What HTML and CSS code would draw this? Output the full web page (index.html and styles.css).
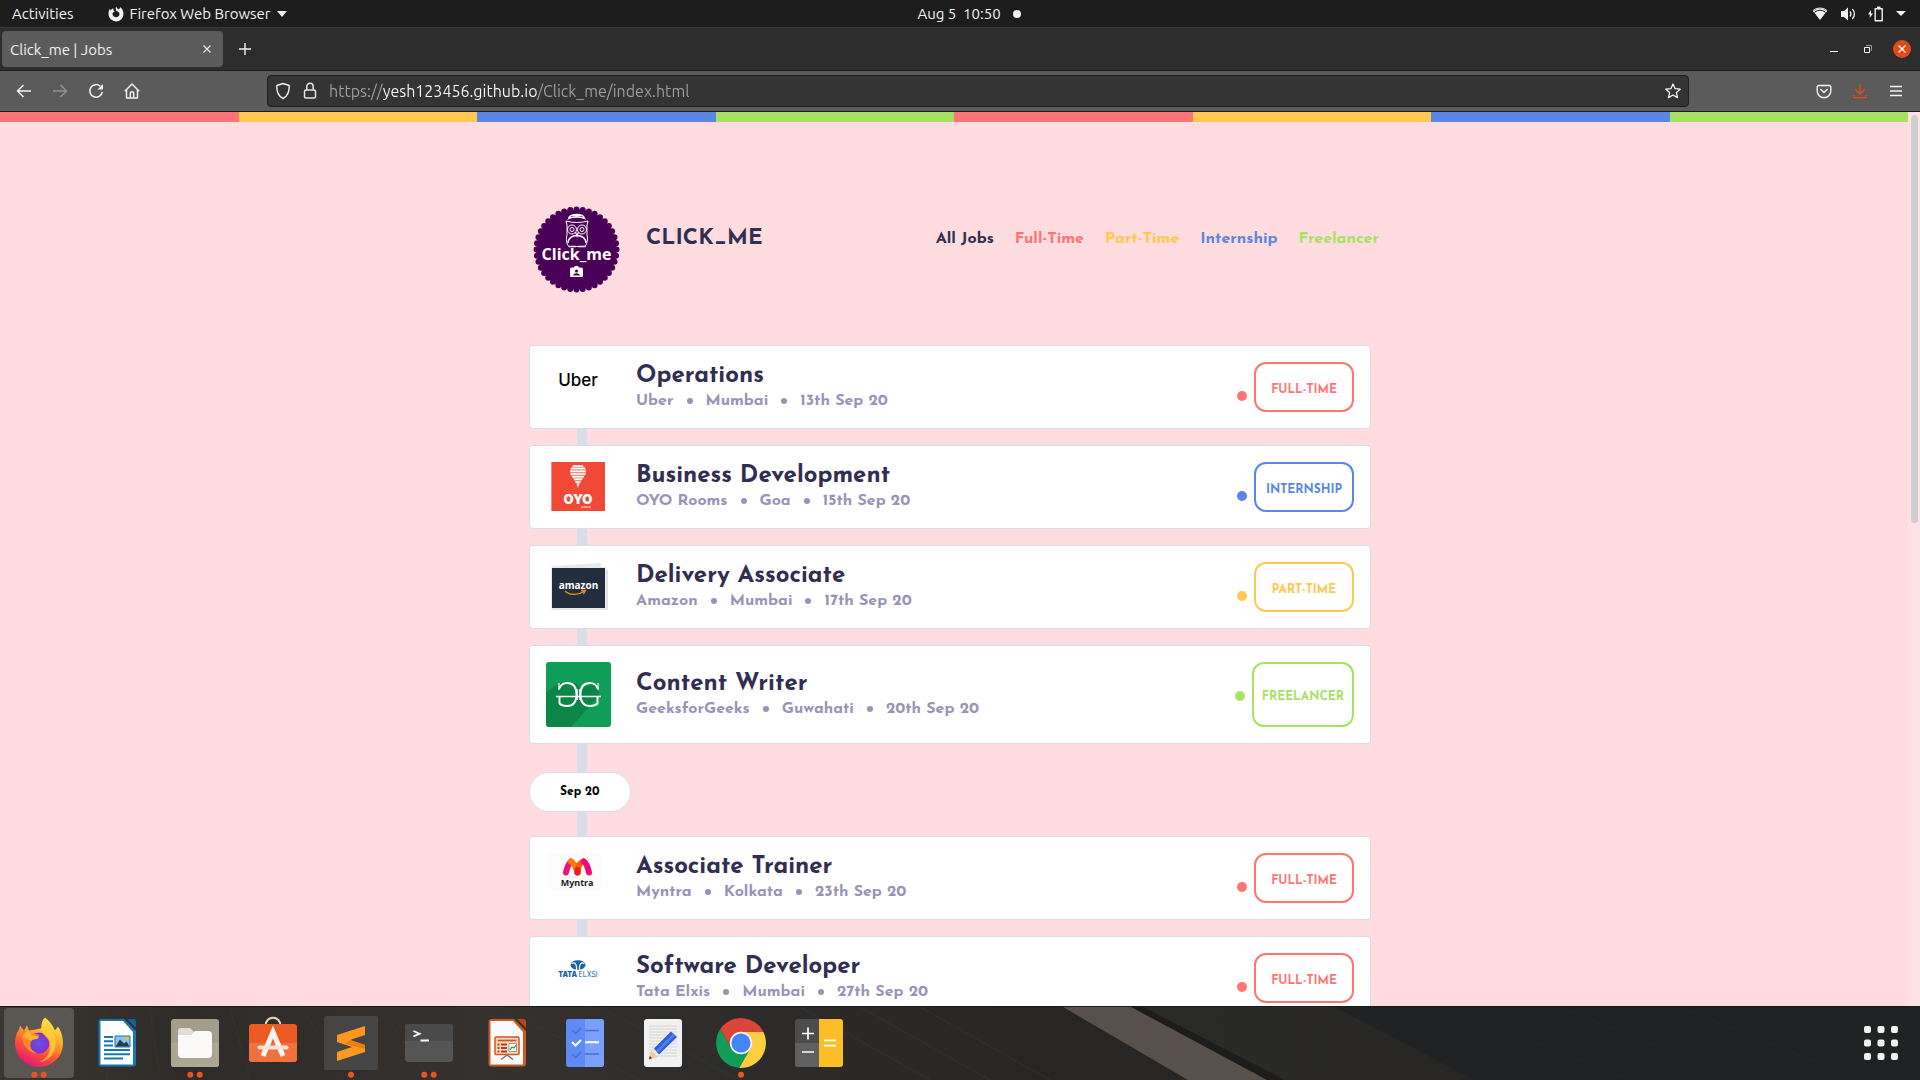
FILE: index.html
```html
<!DOCTYPE html>
<html lang="en">
<head>
<meta charset="utf-8">
<title>Click_me | Jobs</title>
<link rel="stylesheet" href="styles.css">
</head>
<body class="desktop">

<header class="system-bar">
  <div class="system-left">
    <button class="bar-button">Activities</button>
    <button class="bar-button app-menu">
      <svg width="16" height="16" viewBox="0 0 16 16" fill="#f2f2f2"><path d="M8 0.500c.5 1.200 1.800 1.600 1.800 3C12 3 12.200 1.800 12 1c2 1.500 3.500 3.800 3.500 6.800a7.500 7.500 0 0 1-15 .2C.5 6 1 4 2 2.500c0 1 .3 1.500.8 2C3.200 3 4.500 2.300 5.500 2.500 5 4 5.500 5 7 5.200 5 6 4.300 7 4.500 8.500a3.600 3.600 0 0 0 7-.2C11.500 6.500 10.500 5.500 8.500 5 8 4 7.300 2.500 8 .5z"/></svg>
      <span>Firefox Web Browser</span>
      <svg width="10" height="6" viewBox="0 0 10 6" fill="#f2f2f2"><path d="M0 0h10L5 6z"/></svg>
    </button>
  </div>
  <button class="bar-button clock"><span>Aug 5&nbsp; 10:50</span><span class="clock-dot"></span></button>
  <div class="system-right">
    <svg width="16" height="14" viewBox="0 0 16 14"><path d="M8 13 1 4a11 11 0 0 1 14 0z" fill="#f2f2f2"/><path d="M1 3.500a11 11 0 0 1 14 0" fill="none" stroke="#f2f2f2" stroke-width="1"/><path d="M2.500 5.300a9 9 0 0 1 11 0" fill="none" stroke="#1d1d1d" stroke-width="1"/></svg>
    <svg width="16" height="14" viewBox="0 0 16 14"><path d="M1 4h3l4-3.500v13L4 10H1z" fill="#f2f2f2"/><path d="M10 4.500a4 4 0 0 1 0 5M12.300 2a7 7 0 0 1 0 10" fill="none" stroke="#f2f2f2" stroke-width="1.300"/></svg>
    <svg width="16" height="16" viewBox="0 0 16 16"><path d="M3 4 0 8.500h2L1.500 12 5 7.500H3z" fill="#f2f2f2"/><path d="M7.200 2.700h7v12h-7z" fill="none" stroke="#f2f2f2" stroke-width="1.400" stroke-linejoin="round"/><path d="M9 .6h3.500v2H9z" fill="#f2f2f2"/></svg>
    <svg width="10" height="6" viewBox="0 0 10 6" fill="#f2f2f2"><path d="M0 0h10L5 5z"/></svg>
  </div>
</header>

<div class="tab-bar">
  <div class="tab">
    <span>Click_me | Jobs</span>
    <button class="icon-button" aria-label="Close tab"><svg width="8" height="8" viewBox="0 0 8 8"><path d="m.5.500 7 7m0-7-7 7" stroke="#e8e8e8" stroke-width="1.100"/></svg></button>
  </div>
  <button class="icon-button" aria-label="New tab"><svg width="12" height="12" viewBox="0 0 12 12"><path d="M6 0v12M0 6h12" stroke="#f4f4f4" stroke-width="1.400"/></svg></button>
  <div class="window-controls">
    <button class="icon-button" aria-label="Minimise"><svg width="18" height="18" viewBox="0 0 18 18"><path d="M5 11.500h8" stroke="#fff"/></svg></button>
    <button class="icon-button" aria-label="Restore"><svg width="18" height="18" viewBox="0 0 18 18" fill="none"><path d="M7 5.500h5.500V11" stroke="#999"/><path d="M5.500 7.500h5v5h-5z" stroke="#fff"/></svg></button>
    <button class="icon-button" aria-label="Close window"><svg width="18" height="18" viewBox="0 0 18 18"><circle cx="9" cy="9" r="9" fill="#e04b18"/><path d="m5.500 5.500 7 7m0-7-7 7" stroke="#fff" stroke-width="1.300"/></svg></button>
  </div>
</div>

<nav class="toolbar" aria-label="Browser">
  <div class="toolbar-left">
    <button class="icon-button" aria-label="Back"><svg width="16" height="16" viewBox="0 0 16 16" fill="none" stroke="#f4f4f4" stroke-width="1.400"><path d="M15 8H1.500M7.500 2l-6 6 6 6"/></svg></button>
    <button class="icon-button" aria-label="Forward"><svg width="16" height="16" viewBox="0 0 16 16" fill="none" stroke="#939393" stroke-width="1.400"><path d="M1 8h13.500M8.500 2l6 6-6 6"/></svg></button>
    <button class="icon-button" aria-label="Reload"><svg width="16" height="16" viewBox="0 0 16 16" fill="none" stroke="#f4f4f4" stroke-width="1.500"><path d="M14.300 9a6.300 6.300 0 1 1-2-5.800"/><path d="M15 1v5.500H9.500z" fill="#f4f4f4" stroke="none"/></svg></button>
    <button class="icon-button" aria-label="Home"><svg width="16" height="16" viewBox="0 0 16 16" fill="none" stroke="#f4f4f4" stroke-width="1.400" stroke-linejoin="round"><path d="M.8 8.200 8 1l7.200 7.200M2.500 7v8h11V7M6.300 15v-4.500a1.700 1.700 0 0 1 3.400 0V15"/></svg></button>
  </div>
  <div class="address">
    <svg width="16" height="18" viewBox="0 0 16 18" fill="none" stroke="#f4f4f4" stroke-width="1.400"><path d="M8 1.500 14.200 3.500C14.500 10 13 14 8 16.500 3 14 1.500 10 1.800 3.500z" stroke-linejoin="round"/></svg>
    <svg width="14" height="18" viewBox="0 0 14 18" fill="none" stroke="#e4e4e4" stroke-width="1.500"><rect x="1.500" y="8" width="11" height="8" rx="1.500"/><path d="M3.800 8V4.500a3.200 3.200 0 0 1 6.400 0V8"/></svg>
    <input class="address-input" type="text" aria-label="Address" value="https://yesh123456.github.io/Click_me/index.html" spellcheck="false">
    <button class="icon-button" aria-label="Bookmark"><svg width="16" height="16" viewBox="0 0 16 16" fill="none" stroke="#f4f4f4" stroke-width="1.300" stroke-linejoin="round"><path d="m8 1 2.100 4.700 5.100.5-3.800 3.400 1.100 5L8 12l-4.500 2.600 1.100-5L.8 6.200l5.100-.5z"/></svg></button>
  </div>
  <div class="toolbar-right">
    <button class="icon-button" aria-label="Pocket"><svg width="16" height="16" viewBox="0 0 16 16" fill="none" stroke="#f4f4f4" stroke-width="1.400" stroke-linecap="round" stroke-linejoin="round"><path d="M2.500 2.500h11a1.300 1.300 0 0 1 1.300 1.300V8A6.800 6.800 0 0 1 1.200 8V3.800a1.300 1.300 0 0 1 1.300-1.300zM4.800 6.500 8 9.500l3.200-3"/></svg></button>
    <button class="icon-button" aria-label="Downloads"><svg width="16" height="16" viewBox="0 0 16 16" fill="none" stroke="#e04b18" stroke-width="1.400" stroke-linecap="round"><path d="M8 1v10M3.500 6.800 8 11l4.500-4.200M1.800 12.500v1a1.300 1.300 0 0 0 1.300 1.300h9.800a1.300 1.300 0 0 0 1.300-1.300v-1"/></svg></button>
    <button class="icon-button" aria-label="Menu"><svg width="16" height="16" viewBox="0 0 16 16"><path d="M2 3.500h12M2 8h12M2 12.500h12" stroke="#f4f4f4" stroke-width="1.300"/></svg></button>
  </div>
</nav>

<main class="viewport">
  <div class="page">
    <div class="stripes"><i class="red"></i><i class="yellow"></i><i class="blue"></i><i class="green"></i><i class="red"></i><i class="yellow"></i><i class="blue"></i><i class="green"></i></div>
    <div class="container">
      <header class="site-header">
        <svg class="site-logo" width="94" height="88" viewBox="0 0 94 88">
          <circle cx="47.500" cy="44.500" r="40" fill="#4b0057" stroke="#4b0057" stroke-width="6" stroke-linecap="round" pathLength="240" stroke-dasharray="0 6"/>
          <g fill="none" stroke="#fff" stroke-width="1">
            <path d="M39.500 13.500c1.500-5.500 15-5.500 16 0M40 13.500c4-2 11-2 15.500 0l-2-3h-11.500z" stroke-width="1.300"/>
            <path d="M37 16c6 2 15.500 2 22 0l-1 4v10c1 4 .5 8-2 11.500H40c-3-3-3-7-2-11.500V20z"/>
            <circle cx="43" cy="24.500" r="4.500"/><circle cx="43" cy="24.500" r="2"/>
            <circle cx="53" cy="24.500" r="4.500"/><circle cx="53" cy="24.500" r="2"/>
            <path d="m46.500 27 1.500 4 1.500-4M39 38c0-10 18-10 18 0" stroke-width="1.300"/>
            <path d="M39.500 41.500h7.500M49 41.500h7.500" stroke-width="1.400"/>
          </g>
          <text x="47.500" y="55" text-anchor="middle" class="logo-word">Click_me</text>
          <path d="M42.500 62.500h2.500a2.500 1.800 0 0 1 5 0h2.500a1.500 1.500 0 0 1 1.500 1.500v7a1 1 0 0 1-1 1H42a1 1 0 0 1-1-1v-7a1.500 1.500 0 0 1 1.500-1.500z" fill="#fff"/>
          <circle cx="47.500" cy="66" r="1.600" fill="#4b0057"/><path d="M44 70.500c1-3 6-3 7 0z" fill="#4b0057"/>
        </svg>
        <h1 class="site-name">CLICK_ME</h1>
        <nav class="filters" aria-label="Job types">
          <a href="#all">All Jobs</a>
          <a href="#full" class="red">Full-Time</a>
          <a href="#part" class="yellow">Part-Time</a>
          <a href="#intern" class="blue">Internship</a>
          <a href="#free" class="green">Freelancer</a>
        </nav>
      </header>

      <section class="timeline">
        <article class="job">
          <svg class="job-logo" width="65" height="50" viewBox="0 0 65 50"><text x="32" y="24" text-anchor="middle" class="uber-word">Uber</text></svg>
          <div class="job-text"><h2>Operations</h2><ul><li>Uber</li><li>Mumbai</li><li>13th Sep 20</li></ul></div>
          <span class="job-dot red"></span><button class="job-type red">FULL-TIME</button>
        </article>
        <article class="job">
          <svg class="job-logo" width="65" height="50" viewBox="0 0 65 50">
            <path d="M5 0h54v49H5z" fill="#f04a37"/><path d="M5 0h1v49H5z" fill="#f68a7c"/>
            <path d="M27 3h10l3 3.500v5l-8 13.500-8-13.500v-5z" fill="#f58d7f"/>
            <path d="M27 4h10M25 6.500h14M24 9.200h16M24.500 12h15M26 14.700h12M28 17.300h8M29.500 20h5M31 22.500h2M31.500 24.500h1" stroke="#fff" stroke-width="1.600"/>
            <text x="32" y="42" text-anchor="middle" class="oyo-word">OYO</text>
            <path d="M35 45h10" stroke="#f7a79b" stroke-width="1.500"/>
          </svg>
          <div class="job-text"><h2>Business Development</h2><ul><li>OYO Rooms</li><li>Goa</li><li>15th Sep 20</li></ul></div>
          <span class="job-dot blue"></span><button class="job-type blue">INTERNSHIP</button>
        </article>
        <article class="job">
          <svg class="job-logo" width="65" height="50" viewBox="0 0 65 50">
            <path d="m6 4 49-3v6H6z" fill="#e9e9e9"/><path d="M7 8h55v40H7z" fill="#e4e4e4"/><path d="M5 5h55v42H5z" fill="#e6e8ea"/><path d="M6 6h53v40H6z" fill="#222e3e"/>
            <text x="32.500" y="27" text-anchor="middle" class="amazon-word">amazon</text>
            <path d="M19 29c5 4.500 13 4.500 19 .5M35 28.500h4.500l-2 3.500" fill="none" stroke="#e8921b" stroke-width="1.300"/>
          </svg>
          <div class="job-text"><h2>Delivery Associate</h2><ul><li>Amazon</li><li>Mumbai</li><li>17th Sep 20</li></ul></div>
          <span class="job-dot yellow"></span><button class="job-type yellow">PART-TIME</button>
        </article>
        <article class="job">
          <svg class="job-logo" width="65" height="65" viewBox="0 0 65 65">
            <rect width="65" height="65" rx="3" fill="#0f9d58"/>
            <path d="M0 30 14 21h16l3 4 18-4 2 13L25 65H3a3 3 0 0 1-3-3z" fill="#0b8646"/>
            <g fill="none" stroke="#fff" stroke-width="1.900">
              <path d="M52 27c-1.500-4-4-6-8-6-7 0-9.500 5-9.500 11.500S37 44 44 44c3.500 0 6-1 7.500-2.500v-7"/>
              <path d="M13 27c1.500-4 4-6 8-6 7 0 9.500 5 9.500 11.500S28 44 21 44c-3.500 0-6-1-7.500-2.500v-7"/>
              <path d="M10 34.500h45" stroke-width="1.600"/><path d="M13 28v-7M52 28v-7" stroke-width="1.200"/>
              <path d="M31 27v11M34 27v11" stroke-width="1.600"/>
            </g>
          </svg>
          <div class="job-text"><h2>Content Writer</h2><ul><li>GeeksforGeeks</li><li>Guwahati</li><li>20th Sep 20</li></ul></div>
          <span class="job-dot green"></span><button class="job-type green">FREELANCER</button>
        </article>
        <div class="month">Sep 20</div>
        <article class="job">
          <svg class="job-logo" width="65" height="50" viewBox="0 0 65 50">
            <path d="M1 0h54v37H1z" fill="#fcfcfc"/>
            <g fill="none" stroke-width="6" stroke-linecap="round"><path d="M20 19.500c1-5 3-9 5-11" stroke="#f3127a"/><path d="M25 8.500c3 1 5 6 6.500 11" stroke="#ff7a00"/><path d="M37 8.500c-3 1-5 6-5.500 11" stroke="#ff5a00"/><path d="M38 8.500c2.500 2 4 6 5 11" stroke="#f4047f"/><path d="M31.500 17v2.500" stroke="#f01d1d"/></g>
            <text x="31" y="33" text-anchor="middle" class="myntra-word">Myntra</text>
          </svg>
          <div class="job-text"><h2>Associate Trainer</h2><ul><li>Myntra</li><li>Kolkata</li><li>23th Sep 20</li></ul></div>
          <span class="job-dot red"></span><button class="job-type red">FULL-TIME</button>
        </article>
        <article class="job">
          <svg class="job-logo" width="65" height="50" viewBox="0 0 65 50">
            <ellipse cx="32" cy="12" rx="7.500" ry="4.800" fill="#1764ab"/><path d="M25.500 10.500c3-1.500 5.500-.5 5 7M38.500 10.500c-3-1.500-5.500-.5-5 7" fill="none" stroke="#fff" stroke-width="1.200"/>
            <text x="32" y="24" text-anchor="middle" class="tata-word">TATA <tspan class="elxsi-word">ELXSI</tspan></text>
          </svg>
          <div class="job-text"><h2>Software Developer</h2><ul><li>Tata Elxis</li><li>Mumbai</li><li>27th Sep 20</li></ul></div>
          <span class="job-dot red"></span><button class="job-type red">FULL-TIME</button>
        </article>
      </section>
    </div>
  </div>
  <div class="scrollbar"><div class="scroll-thumb"></div></div>
</main>

<footer class="dock">
  <svg class="wallpaper" viewBox="0 0 1920 73" preserveAspectRatio="none">
    <defs>
      <linearGradient id="wood"><stop offset="0" stop-color="#3a3733"/><stop offset=".15" stop-color="#2e2b28"/><stop offset=".4" stop-color="#34312e"/><stop offset=".58" stop-color="#2f2d2b"/><stop offset=".85" stop-color="#282624"/></linearGradient>
      <linearGradient id="slate"><stop offset="0" stop-color="#2b2b2a"/><stop offset="1" stop-color="#272625"/></linearGradient>
    </defs>
    <path d="M0 0h1200v73H0z" fill="url(#wood)"/>
    <path d="M600 0 740 73M500 0l140 73M800 0l130 73M860 0l130 73M920 0l130 73M380 0l50 73M300 0l50 73M230 0l20 73M150 0l10 73M70 0 66 73M106 0l1 73" stroke="#403c38" opacity=".4"/>
    <path d="M1131 0h220l150 73H1267z" fill="url(#slate)"/>
    <path d="M1335 0h585v73h-445z" fill="#202223"/>
    <path d="m1450 0 180 73M1560 0l180 73M1680 0l180 73M1220 0l150 73M1260 0l150 73" stroke="#2a2c2c" opacity=".5"/>
    <path d="m1131 0 136 73h18L1143 0z" fill="#1e1d1c"/>
    <path d="M1063 0h68l136 73h-79z" fill="#57504b"/>
  </svg>
  <div class="launchers">
    <button class="launcher active" aria-label="Firefox">
      <svg width="70" height="70" viewBox="0 0 70 70">
        <defs><linearGradient id="fox" x1=".8" y1="0" x2=".3" y2="1"><stop offset="0" stop-color="#fff04a"/><stop offset=".35" stop-color="#ffb02a"/><stop offset=".65" stop-color="#ff5634"/><stop offset="1" stop-color="#e0137a"/></linearGradient><radialGradient id="globe"><stop offset="0" stop-color="#5a57e8"/><stop offset="1" stop-color="#8a2ccb"/></radialGradient></defs>
        <path d="M41 9.500c5 4 8 8 10 13l3-4c4 6 5 12 5 17a24 23.500 0 0 1-48 0c0-5 1-10 4-14l1-4 4 5 3-5 2 5c4-1 10-1 13-3-1-4 0-7 3-10z" fill="url(#fox)"/>
        <circle cx="35" cy="35" r="10.500" fill="url(#globe)"/>
        <path d="M18 27c5-1 10-2 17 0l-1 3c-3 0-5 1-7 4-2 4 0 9 6 11-9 0-15-8-15-18z" fill="#ff8a24"/>
        <path d="m18 28 7-5 2 4 8 2-2 2-7 1z" fill="#ffb52e"/>
        <path d="M40 11c6 8 14 15 11 30-2 7-8 12-15 13 9-5 11-12 10-18-1-7-8-8-9-15 0-4 1-7 3-10z" fill="#ffd23a" opacity=".75"/>
        <path d="M30.300 66.700h.01M39.700 66.700h.01" class="running"/>
      </svg>
    </button>
    <button class="launcher" aria-label="Writer">
      <svg width="70" height="70" viewBox="0 0 70 70">
        <path d="M19.500 11H42l12 12v32.500a3 3 0 0 1-3 3H19.500a3 3 0 0 1-3-3V14a3 3 0 0 1 3-3z" fill="#1677b4"/><path d="M18.500 13H41l10 11v32.500H18.500z" fill="#fff"/>
        <path d="M45 11h6a3 3 0 0 1 3 3v6z" fill="#0d639a"/>
        <path d="M22 29h9M22 33.300h9M22 37.600h9M22 42h26M22 46.300h26M22 50.600h19" stroke="#1677b4" stroke-width="2"/>
        <path d="M33 28h15v11H33z" fill="#8ec4ea" stroke="#1677b4"/><path d="m33.500 38.500 4.500-7 4 4 2.500-2 3 5z" fill="#2e3a45"/><circle cx="45.500" cy="30.500" r="1.700" fill="#f4c224"/>
      </svg>
    </button>
    <button class="launcher" aria-label="Files">
      <svg width="70" height="70" viewBox="0 0 70 70">
        <rect x="11" y="11" width="48" height="48" rx="3" fill="#a39d8c"/><path d="M11 35h48v21a3 3 0 0 1-3 3H14a3 3 0 0 1-3-3z" fill="#aca693"/>
        <path d="M21 20h9l4 4h16a2 2 0 0 1 2 2v4H18v-7a3 3 0 0 1 3-3z" fill="#e0ddd3"/><path d="M18 27h13l4-4h13a4 4 0 0 1 4 4v19a4 4 0 0 1-4 4H22a4 4 0 0 1-4-4z" fill="#fbfaf8"/>
        <path d="M30.300 66.700h.01M39.700 66.700h.01" class="running"/>
      </svg>
    </button>
    <button class="launcher" aria-label="Software">
      <svg width="70" height="70" viewBox="0 0 70 70">
        <path d="M27.500 18c0-11 15-11 15 0" fill="none" stroke="#ecd6b4" stroke-width="2"/>
        <rect x="11" y="16" width="48" height="38" rx="3" fill="#ee5a24"/><path d="M11 35h48v16a3 3 0 0 1-3 3H14a3 3 0 0 1-3-3z" fill="#f1703f"/>
        <path d="m25 48 10-24 10 24" fill="none" stroke="#fff5ee" stroke-width="5"/><path d="M21.500 39.500h27" stroke="#ffe3d5" stroke-width="4" stroke-linecap="round"/>
      </svg>
    </button>
    <button class="launcher" aria-label="Sublime Text">
      <svg width="70" height="70" viewBox="0 0 70 70">
        <rect x="8" y="8" width="54" height="54" rx="2" fill="#454545"/><path d="M21 27 49 18v9l-15 5 15 5v7l-28 9v-9l15-5-15-5z" fill="#ff9820"/><path d="m34 32 15 5v4l-20-5z" fill="#ec7f0a"/>
        <path d="M35 66.700h.01" class="running"/>
      </svg>
    </button>
    <button class="launcher" aria-label="Terminal">
      <svg width="70" height="70" viewBox="0 0 70 70">
        <rect x="11" y="16" width="48" height="38" rx="3" fill="#555"/><path d="M14 16h42a3 3 0 0 1 3 3v14H11V19a3 3 0 0 1 3-3z" fill="#4a4a4a"/>
        <path d="m19.500 23 6 2.700-6 2.700M26.500 32.500H35" fill="none" stroke="#fff" stroke-width="1.800"/>
        <path d="M30.300 66.700h.01M39.700 66.700h.01" class="running"/>
      </svg>
    </button>
    <button class="launcher" aria-label="Impress">
      <svg width="70" height="70" viewBox="0 0 70 70">
        <path d="M19.500 11H42l12 12v32.500a3 3 0 0 1-3 3H19.500a3 3 0 0 1-3-3V14a3 3 0 0 1 3-3z" fill="#cc5a22"/><path d="M18.500 13H41l10 11v32.500H18.500z" fill="#fafafa"/><path d="M45 11h6a3 3 0 0 1 3 3v6z" fill="#b8480f"/>
        <rect x="23" y="29" width="24" height="17.500" rx="1" fill="#fbd7c3" stroke="#cc5a22" stroke-width="1.500"/><path d="M25.500 32.500h19" stroke="#cc5a22" stroke-width="1.800"/><path d="M25.500 36.500h2m-2 3.500h2m-2 3.500h2M29 36.500h6M29 40h6m-6 3.500h6" stroke="#a8421a" stroke-width="2.200"/>
        <path d="M37 35.500h7.500v8H37z" fill="#fff" stroke="#777" stroke-width=".7"/><path d="m38 42 2-3 2 1 2-3" fill="none" stroke="#2a9a3a" stroke-width="1.200"/><path d="m35 47-6 4.500M35 47l6 4.500" stroke="#777" stroke-width="1.500"/>
      </svg>
    </button>
    <button class="launcher" aria-label="To Do">
      <svg width="70" height="70" viewBox="0 0 70 70">
        <rect x="16" y="11" width="38" height="48" rx="3" fill="#5f8bf7"/><path d="M35 11h16a3 3 0 0 1 3 3v42a3 3 0 0 1-3 3H35z" fill="#7ba0f9"/>
        <path d="m22 22 3.500 3.500L31 20M22 46l3.500 3.500L31 44M35 22.500h14M35 46h14" fill="none" stroke="#4a70cf" stroke-width="1.700"/><path d="m22 34 3.500 3.500L31 32M35 34.300h14" fill="none" stroke="#fff" stroke-width="2"/>
      </svg>
    </button>
    <button class="launcher" aria-label="Text Editor">
      <svg width="70" height="70" viewBox="0 0 70 70">
        <rect x="16" y="11" width="38" height="48" rx="3" fill="#f1f1f1"/>
        <path d="M21 18h28M21 21h28M21 24h28M21 27h28M21 30h28M21 33h28M21 36h28M21 39h28M21 42h28M21 45h28M21 48h28" stroke="#cfcfcf" stroke-width=".8"/>
        <path d="m21 51.500 2-9 7 6.500z" fill="#f2c9a0"/><path d="m21 51.500.8-3.500 2.200 2.200z" fill="#333"/><path d="m26 40.500 17-17 6 5.500-18 17.500z" fill="#2d5fd6"/><path d="m28 42.500 17-17 2 2-17 17z" fill="#4d80f0"/>
      </svg>
    </button>
    <button class="launcher" aria-label="Chrome">
      <svg width="70" height="70" viewBox="0 0 70 70">
        <path d="M14.300 21.100A25 25 0 0 0 33.300 59.900L44.500 40.500 35 35l-9.500 5.500z" fill="#0f9d58"/><path d="M57.400 24A25 25 0 0 1 33.300 59.900L44.500 40.500 35 24z" fill="#ffcd40"/><path d="M35 24h22.400A25 25 0 0 0 14.300 21.100l11.200 19.400L35 35z" fill="#db4437"/>
        <circle cx="35" cy="35" r="11.200" fill="#f1f1f1"/><circle cx="35" cy="35" r="9.500" fill="#4285f4"/>
        <path d="M35 66.700h.01" class="running"/>
      </svg>
    </button>
    <button class="launcher" aria-label="Calculator">
      <svg width="70" height="70" viewBox="0 0 70 70">
        <rect x="11" y="11" width="48" height="48" rx="3" fill="#4c4c4c"/><path d="M11 35h24v24H14a3 3 0 0 1-3-3z" fill="#606060"/><path d="M35 11h21a3 3 0 0 1 3 3v42a3 3 0 0 1-3 3H35z" fill="#fdbd27"/>
        <path d="M24 19.500v12M18 25.500h12M18 44h12M40 32.300h12M40 37.600h12" stroke="#fff" stroke-width="1.700"/>
      </svg>
    </button>
  </div>
  <button class="launcher" aria-label="Show applications">
    <svg width="70" height="70" viewBox="0 0 70 70" fill="#f2f2f0"><g id="grid-row"><rect x="18" y="18" width="7" height="7" rx="2"/><rect x="31.500" y="18" width="7" height="7" rx="2"/><rect x="45" y="18" width="7" height="7" rx="2"/></g><use href="#grid-row" y="13.500"/><use href="#grid-row" y="27"/></svg>
  </button>
</footer>
</body>
</html>
```
FILE: styles.css
```css
* { box-sizing: border-box; }

.desktop {
  margin: 0;
  height: 100vh;
  display: flex;
  flex-direction: column;
  overflow: hidden;
  background: #2d2d2d;
  font-family: Ubuntu, "Noto Sans", sans-serif;
  font-size: 15px;
  color: #f2f2f2;
}

svg { display: block; flex: none; }

button {
  margin: 0;
  padding: 0;
  border: 0;
  background: none;
  color: inherit;
  font: inherit;
}

.icon-button { display: flex; flex: none; }

/* System bar */
.system-bar {
  flex: none;
  height: 28px;
  padding: 0 14px 0 12px;
  display: grid;
  grid-template-columns: 1fr auto 1fr;
  align-items: center;
  background: #1d1d1d;
  border-bottom: 1px solid #3a3a3a;
}
.system-left, .system-right, .bar-button { display: flex; align-items: center; }
.system-left { gap: 34px; }
.app-menu { gap: 6px; }
.clock { gap: 12px; padding-left: 20px; }
.clock-dot { width: 8px; height: 8px; border-radius: 50%; background: #f2f2f2; }
.system-right { justify-content: flex-end; gap: 12px; }

/* Tabs */
.tab-bar {
  flex: none;
  height: 43px;
  padding: 0 9px 0 2px;
  display: flex;
  align-items: center;
  gap: 16px;
  border-bottom: 1px solid #1c1c1c;
}
.tab {
  width: 221px;
  height: 36px;
  padding: 0 12px 0 8px;
  display: flex;
  align-items: center;
  justify-content: space-between;
  border-radius: 4px;
  background: #5b5b5b;
}
.window-controls { margin-left: auto; display: flex; gap: 16px; }

/* Toolbar */
.toolbar {
  flex: none;
  height: 41px;
  display: flex;
  align-items: center;
  background: #5b5b5b;
  border-bottom: 1px solid #1c1c1c;
}
.toolbar-left { width: 267px; padding-left: 16px; display: flex; gap: 20px; }
.toolbar-right { width: 231px; padding-right: 16px; display: flex; justify-content: flex-end; gap: 20px; }
.address {
  flex: 1;
  height: 32px;
  padding: 0 7px;
  display: flex;
  align-items: center;
  gap: 12px;
  border: 1px solid #1e1e1e;
  border-radius: 4px;
  background: #343434;
}
.address-input {
  flex: 1;
  min-width: 0;
  padding: 0;
  border: 0;
  outline: 0;
  font: inherit;
  font-size: 16px;
  color: transparent;
  background: linear-gradient(90deg, #a0a0a0 54px, #fbfbfe 54px 208px, #a0a0a0 208px);
  -webkit-background-clip: text;
  background-clip: text;
}

/* Page */
.viewport {
  flex: 1;
  min-height: 0;
  display: flex;
  overflow: hidden;
  background: #ffdce0;
  font-family: "Josefin Sans", Lato, sans-serif;
  font-weight: 700;
  color: #312e50;
}
.page { flex: 1; }
.scrollbar { width: 12px; padding: 3px 2px 0 3px; background: #fde1e4; }
.scroll-thumb { height: 408px; border-radius: 4px; background: #cfcfd0; }

.stripes { display: flex; height: 10px; }
.stripes i { flex: 1; background: currentColor; }

.red { color: #ff7474; }
.yellow { color: #ffc850; }
.blue { color: #5a86e4; }
.green { color: #a7e163; }

.container { max-width: 850px; margin: 0 auto; }

.site-header {
  padding: 83px 0 52px;
  display: flex;
  align-items: flex-start;
}
.site-name {
  margin: 21px 0 0 23px;
  font-size: 22px;
  line-height: 26px;
}
.filters {
  margin: 24px 0 0 auto;
  display: flex;
  gap: 21px;
  font-size: 16px;
  line-height: 20px;
}
.filters a { text-decoration: none; }
.filters a:not([class]) { color: #312e50; }

.timeline {
  position: relative;
  margin-right: 8px;
  display: flex;
  flex-direction: column;
  gap: 16px;
}
.timeline::before {
  content: "";
  position: absolute;
  top: 0;
  bottom: 0;
  left: 48px;
  width: 10px;
  background: #d8dde9;
}
.job {
  position: relative;
  padding: 16px;
  display: flex;
  border: 1px solid #d8dde9;
  border-radius: 4px;
  background: #fff;
}
.job-text {
  flex: 1;
  margin-left: 25px;
  align-self: center;
}
.job-text h2 { margin: 0; font-size: 24px; line-height: 24px; }
.job-text ul {
  margin: 4px 0 0;
  padding: 0;
  display: flex;
  list-style: none;
  font-size: 16px;
  line-height: 18px;
  color: #9795b5;
}
.job-text li { display: flex; align-items: center; }
.job-text li + li::before {
  content: "";
  width: 6px;
  height: 6px;
  margin: 0 13px;
  border-radius: 50%;
  background: currentColor;
}
.job-dot {
  width: 10px;
  height: 10px;
  margin: 29px 7px 0 0;
  border-radius: 50%;
  background: currentColor;
}
.job-type {
  min-width: 100px;
  padding: 5px 8px 0;
  border: 2px solid;
  border-radius: 12px;
  font-size: 12px;
}
.job-type.red { color: #ff7474; }
.job-type.yellow { color: #ffc850; }
.job-type.blue { color: #5a86e4; }
.job-type.green { color: #a7e163; }

.month {
  position: relative;
  align-self: flex-start;
  margin: 12px 0 8px;
  padding: 0 30px;
  border: 1px solid #d8dde9;
  border-radius: 20px;
  background: #fff;
  font-size: 12px;
  line-height: 38px;
  color: #000;
}

.logo-word { font: 700 16px "Open Sans", sans-serif; fill: #fff; }
.uber-word { font: 500 17px Inter, sans-serif; fill: #000; }
.oyo-word { font: 900 13px Inter, sans-serif; fill: #fff; }
.amazon-word { font: 700 10px "Open Sans", sans-serif; fill: #fff; }
.myntra-word { font: 700 9px "Noto Sans", sans-serif; fill: #222; }
.tata-word { font: 900 7px Inter, sans-serif; fill: #1764ab; }
.elxsi-word { font-weight: 400; }

/* Dock */
.dock {
  position: relative;
  flex: none;
  padding: 1px 4px 2px;
  display: flex;
  justify-content: space-between;
  border-top: 1px solid #1b1a19;
}
.wallpaper { position: absolute; inset: 0; width: 100%; height: 100%; }
.launchers { display: flex; gap: 8px; }
.launcher { position: relative; border-radius: 4px; }
.launcher.active { background: #5a5753; }
.running { stroke: #e95420; stroke-width: 6; stroke-linecap: round; }
```
